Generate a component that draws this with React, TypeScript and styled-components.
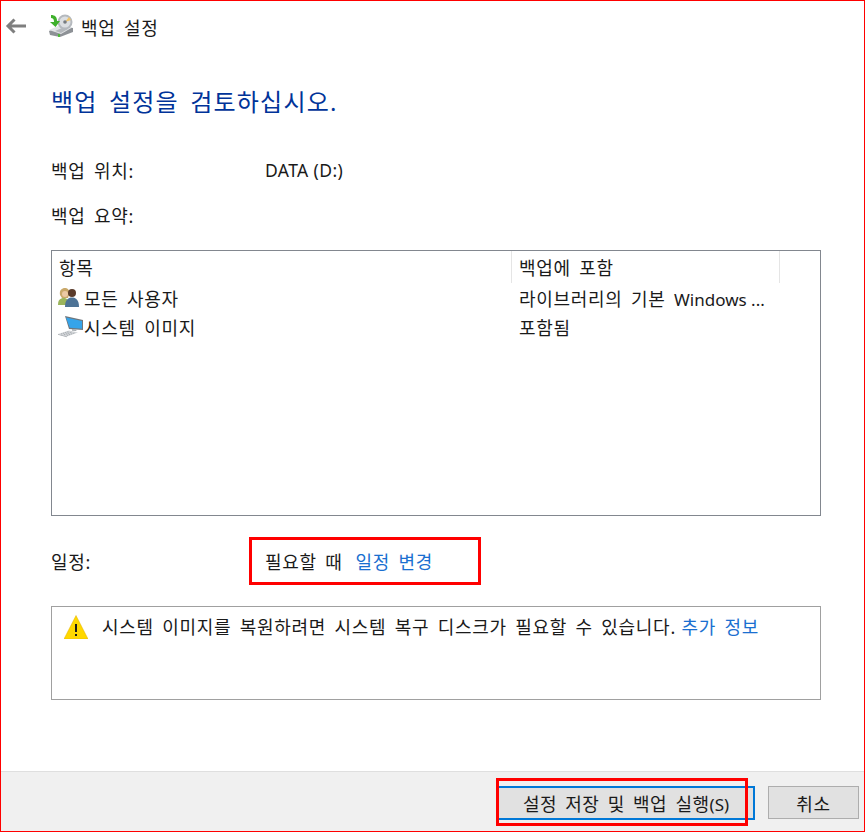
import styled, { createGlobalStyle } from 'styled-components';

const GlobalStyle = createGlobalStyle`
  html, body {
    margin: 0;
    padding: 0;
    background: #ffffff;
  }
  body {
    font-family: "Noto Sans", "Noto Sans CJK KR", sans-serif;
    font-size: 18px;
    letter-spacing: 0.7px;
    word-spacing: 3.1px;
    color: #1a1a1a;
  }
`;

function BackupIcon() {
  return (
    <svg width="26" height="24" viewBox="0 0 26 24">
      <path d="M1 17 L10 13 L25 14 L25 18 L12 23 L2 21 Z" fill="#8d9196" />
      <path d="M1 16 L10 12 L25 13 L13 20 Z" fill="#e2e4e6" />
      <path d="M7 17 L14 14 L20 15 L13 19 Z" fill="#b4b8bc" />
      <circle cx="17" cy="8" r="7.5" fill="#b5b9be" />
      <circle cx="17" cy="8" r="5.5" fill="#dcdfe2" />
      <path d="M17 8 L21 3 L23 6 Z" fill="#f0c46a" />
      <circle cx="17" cy="8" r="1.8" fill="#777c81" />
      <path d="M3 1 C7 1 9 3 9 7 L12 7 L7.5 13 L2 8 L6 8 C6 5 5 4 3 4 Z" fill="#3fb02c" />
      <rect x="10" y="20" width="2" height="3" fill="#4fb83a" />
    </svg>
  );
}

function UsersIcon() {
  return (
    <svg width="22" height="20" viewBox="0 0 22 20">
      <path d="M2 7 C1 2 4 0 7 0 C10 0 12 2 11 7 L10 10 L4 10 Z" fill="#c9a86a" />
      <circle cx="7" cy="6" r="3" fill="#ecc9a4" />
      <path d="M0 17 C0 12 2 10 6 10 C9 10 11 12 11 17 Z" fill="#9bb55c" />
      <circle cx="14" cy="5" r="4" fill="#5a3b2a" />
      <path d="M7 19 C7 12 10 9.5 14 9.5 C18 9.5 21 12 21 19 Z" fill="#4d7396" />
    </svg>
  );
}

function ComputerIcon() {
  return (
    <svg width="26" height="22" viewBox="0 0 26 22">
      <path d="M7 0 L25 4 L25 14 L11 13 Z" fill="#6f767c" />
      <path d="M8 1.5 L24 5 L24 12.8 L11.7 11.8 Z" fill="#35a4ea" />
      <path d="M14 13 L19 13.5 L18 15 L14 14.8 Z" fill="#a7acb0" />
      <path d="M0 18 L11 14.5 L20 16.5 L9 20.5 Z" fill="#d3d6d9" />
      <path d="M3 18 L11 15.5 M6 18.8 L14 16 M9 19.4 L17 16.8" stroke="#9ba0a5" strokeWidth="0.8" strokeDasharray="1.2 0.8" />
      <path d="M0 18 L9 20.5 L9 21.2 L0 18.8 Z" fill="#9ea3a8" />
    </svg>
  );
}

function WarningIcon() {
  return (
    <svg width="24" height="24" viewBox="0 0 24 24">
      <path d="M12 0.5 L24 24 L0 24 Z" fill="#ffd800" stroke="#e3b000" strokeWidth="0.5" />
      <rect x="11" y="9" width="2" height="8" fill="#1a1a1a" />
      <rect x="11" y="19" width="2" height="2" fill="#1a1a1a" />
    </svg>
  );
}

function BackArrow() {
  return (
    <svg width="21" height="16" viewBox="0 0 21 16">
      <path d="M21 8 L3 8 M9.5 1.5 L3 8 L9.5 14.5" fill="none" stroke="#7f7f7f" strokeWidth="3" />
    </svg>
  );
}

export default function App() {
  return (
    <>
      <GlobalStyle />
      <Window>
        <TitleBar>
          <BackButton>
            <BackArrow />
          </BackButton>
          <TitleIcon>
            <BackupIcon />
          </TitleIcon>
          <TitleText>백업 설정</TitleText>
        </TitleBar>
        <Content>
          <Heading>백업 설정을 검토하십시오.</Heading>
          <InfoRow>
            <InfoLabel>백업 위치:</InfoLabel>
            <DriveName>DATA (D:)</DriveName>
          </InfoRow>
          <SummaryLabel>백업 요약:</SummaryLabel>
          <ListBox>
            <ListHeader>
              <HeaderCell $width={459}>항목</HeaderCell>
              <HeaderCell $width={269} $divider>
                백업에 포함
              </HeaderCell>
            </ListHeader>
            <ListRow>
              <NameCell>
                <UsersIcon />
                <NameText $gap={4}>모든 사용자</NameText>
              </NameCell>
              <ValueCell>
                라이브러리의 기본 <LatinText>Windows ...</LatinText>
              </ValueCell>
            </ListRow>
            <ListRow>
              <NameCell>
                <ComputerIcon />
                <NameText $gap={0}>시스템 이미지</NameText>
              </NameCell>
              <ValueCell>포함됨</ValueCell>
            </ListRow>
          </ListBox>
          <ScheduleRow>
            <InfoLabel>일정:</InfoLabel>
            <span>필요할 때</span>
            <ChangeLink>일정 변경</ChangeLink>
            <ScheduleMark />
          </ScheduleRow>
          <NoticeBox>
            <WarningIcon />
            <NoticeText>
              시스템 이미지를 복원하려면 시스템 복구 디스크가 필요할 수 있습니다. <NoticeLink>추가 정보</NoticeLink>
            </NoticeText>
          </NoticeBox>
        </Content>
        <Footer>
          <SaveButton>
            <span>
              설정 저장 및 백업 실행<LatinText>(S)</LatinText>
            </span>
            <SaveMark />
          </SaveButton>
          <CancelButton>취소</CancelButton>
        </Footer>
      </Window>
    </>
  );
}

const Window = styled.div`
  box-sizing: border-box;
  width: 865px;
  height: 832px;
  border: 1px solid #ff0000;
  display: flex;
  flex-direction: column;
  overflow: hidden;
`;

const TitleBar = styled.div`
  display: flex;
  align-items: center;
  height: 46px;
  padding-top: 3px;
  box-sizing: border-box;
`;

const BackButton = styled.div`
  display: flex;
  margin-left: 4px;
  width: 43px;
`;

const TitleIcon = styled.div`
  display: flex;
  width: 33px;
`;

const TitleText = styled.span`
  padding-top: 3px;
`;

const Content = styled.div`
  flex: 1;
  display: flex;
  flex-direction: column;
  padding: 0 43px 0 50px;
`;

const Heading = styled.h1`
  margin: 39px 0 0;
  font-size: 24px;
  font-weight: 400;
  line-height: 32px;
  color: #003399;
  letter-spacing: 1.2px;
  word-spacing: 4px;
`;

const InfoRow = styled.div`
  display: flex;
  align-items: center;
  height: 24px;
  margin-top: 40px;
`;

const InfoLabel = styled.span`
  width: 214px;
`;

const LatinText = styled.span`
  font-size: 17px;
  letter-spacing: 0;
  word-spacing: 0;
  white-space: nowrap;
`;

const DriveName = styled(LatinText)`
  font-size: 17.5px;
  letter-spacing: 0.4px;
`;

const SummaryLabel = styled.div`
  height: 24px;
  margin-top: 22px;
  line-height: 24px;
`;

const ListBox = styled.div`
  box-sizing: border-box;
  height: 266px;
  margin-top: 22px;
  border: 1px solid #82878f;
`;

const ListHeader = styled.div`
  display: flex;
  height: 32px;
`;

const HeaderCell = styled.div<{ $width: number; $divider?: boolean }>`
  box-sizing: border-box;
  width: ${(props) => props.$width}px;
  padding-left: 7px;
  border-left: ${(props) => (props.$divider ? '1px solid #e5e5e5' : 'none')};
  border-right: ${(props) => (props.$divider ? '1px solid #e5e5e5' : 'none')};
  line-height: 35px;
`;

const ListRow = styled.div`
  display: flex;
  height: 29px;
  align-items: center;
`;

const NameCell = styled.div`
  display: flex;
  align-items: center;
  width: 459px;
  padding-left: 6px;
  box-sizing: border-box;
`;

const NameText = styled.span<{ $gap: number }>`
  margin-left: ${(props) => props.$gap}px;
`;

const ValueCell = styled.div`
  padding-left: 8px;
  white-space: nowrap;
`;

const ScheduleRow = styled.div`
  position: relative;
  display: flex;
  align-items: center;
  height: 24px;
  margin-top: 33px;
`;

const ChangeLink = styled.span`
  margin-left: 13px;
  color: #1a6fd0;
`;

const ScheduleMark = styled.div`
  position: absolute;
  left: 198px;
  top: -12px;
  width: 232px;
  height: 48px;
  border: 3px solid #ff0000;
  box-sizing: border-box;
`;

const NoticeBox = styled.div`
  box-sizing: border-box;
  display: flex;
  align-items: flex-start;
  height: 94px;
  margin-top: 33px;
  padding: 8px 12px;
  border: 1px solid #a0a0a0;
`;

const NoticeText = styled.div`
  margin-left: 14px;
  line-height: 24px;
  white-space: nowrap;
`;

const NoticeLink = styled.span`
  margin-left: -3px;
  color: #1a6fd0;
`;

const Footer = styled.div`
  box-sizing: border-box;
  display: flex;
  justify-content: flex-end;
  align-items: flex-start;
  gap: 13px;
  height: 60px;
  padding: 14px 5px 0 0;
  background: #f0f0f0;
  border-top: 1px solid #dfdfdf;
`;

const SaveButton = styled.div`
  position: relative;
  box-sizing: border-box;
  width: 258px;
  height: 34px;
  display: flex;
  align-items: center;
  justify-content: center;
  background: #e1e1e1;
  border: 2px solid #0078d7;
  letter-spacing: 0.5px;
`;

const SaveMark = styled.div`
  position: absolute;
  left: -3px;
  top: -10px;
  width: 252px;
  height: 48px;
  box-sizing: border-box;
  border: 3px solid #ff0000;
`;

const CancelButton = styled.div`
  box-sizing: border-box;
  width: 91px;
  height: 33px;
  display: flex;
  align-items: center;
  justify-content: center;
  background: #e1e1e1;
  border: 1px solid #adadad;
`;
